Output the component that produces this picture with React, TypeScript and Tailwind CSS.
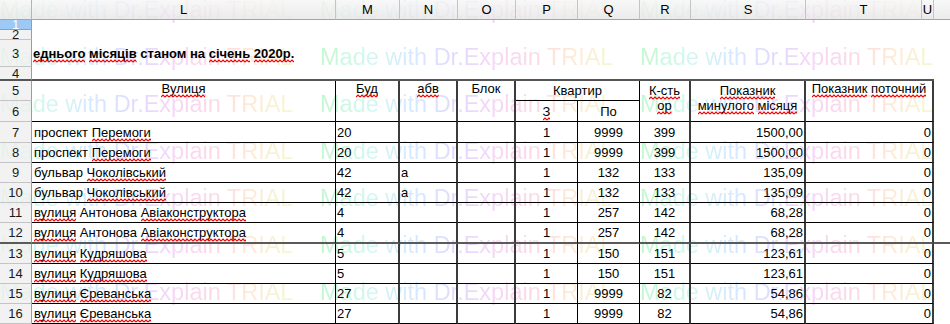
import React, { useId } from 'react';

// --- Types ---
type Part = [string, boolean];
type Row = {
  n: number;
  street: Part[];
  bud: string;
  abv: string;
  z: string;
  po: string;
  k: string;
  prev: string;
  cur: string;
};

const rows: Row[] = [
  { n: 7, street: [['проспект ', false], ['Перемоги', true]], bud: '20', abv: '', z: '1', po: '9999', k: '399', prev: '1500,00', cur: '0' },
  { n: 8, street: [['проспект ', false], ['Перемоги', true]], bud: '20', abv: '', z: '1', po: '9999', k: '399', prev: '1500,00', cur: '0' },
  { n: 9, street: [['бульвар ', false], ['Чоколівський', true]], bud: '42', abv: 'а', z: '1', po: '132', k: '133', prev: '135,09', cur: '0' },
  { n: 10, street: [['бульвар ', false], ['Чоколівський', true]], bud: '42', abv: 'а', z: '1', po: '132', k: '133', prev: '135,09', cur: '0' },
  { n: 11, street: [['вулиця', true], [' Антонова ', false], ['Авіаконструктора', true]], bud: '4', abv: '', z: '1', po: '257', k: '142', prev: '68,28', cur: '0' },
  { n: 12, street: [['вулиця', true], [' Антонова ', false], ['Авіаконструктора', true]], bud: '4', abv: '', z: '1', po: '257', k: '142', prev: '68,28', cur: '0' },
  { n: 13, street: [['вулиця', true], [' ', false], ['Кудряшова', true]], bud: '5', abv: '', z: '1', po: '150', k: '151', prev: '123,61', cur: '0' },
  { n: 14, street: [['вулиця', true], [' ', false], ['Кудряшова', true]], bud: '5', abv: '', z: '1', po: '150', k: '151', prev: '123,61', cur: '0' },
  { n: 15, street: [['вулиця', true], [' ', false], ['Єреванська', true]], bud: '27', abv: '', z: '1', po: '9999', k: '82', prev: '54,86', cur: '0' },
  { n: 16, street: [['вулиця', true], [' ', false], ['Єреванська', true]], bud: '27', abv: '', z: '1', po: '9999', k: '82', prev: '54,86', cur: '0' },
];

const colLetters = ['L', 'M', 'N', 'O', 'P', 'Q', 'R', 'S', 'T', 'U', ''];

// spell-check squiggle under one word
function Word({ t }: { t: string }) {
  const id = 'sq' + useId().replace(/[^a-zA-Z0-9]/g, '');
  return (
    <span className="relative inline-block">
      {t}
      <svg className="absolute left-0 top-[13px] w-full h-[4px]">
        <defs>
          <pattern id={id} width="4" height="4" patternUnits="userSpaceOnUse">
            <path d="M0 3 L2 1 L4 3" fill="none" stroke="#f00000" strokeWidth="1.15" />
          </pattern>
        </defs>
        <rect width="100%" height="4" fill={`url(#${id})`} />
      </svg>
    </span>
  );
}

function Sp({ children }: { children: string }) {
  const words = children.split(' ');
  return (
    <span className="whitespace-pre">
      {words.map((w, i) => (
        <React.Fragment key={i}>
          {i > 0 && ' '}
          <Word t={w} />
        </React.Fragment>
      ))}
    </span>
  );
}

function RowHead({ n, cls = 'border-b border-b-[#c4c4c4]', active = false }: { n: number; cls?: string; active?: boolean }) {
  return (
    <div
      className={`flex items-center justify-center leading-none border-r border-r-[#9c9c9c] ${cls} ${
        active ? 'bg-[#9ccaf4] text-white' : 'bg-[#efefefcc] text-[#1a1a1a]'
      }`}
    >
      {n}
    </div>
  );
}

function Watermark() {
  return (
    <span className="inline-block whitespace-nowrap text-[23.5px] leading-none bg-[linear-gradient(90deg,#c4f7cf_0%,#d2f8f0_16%,#d6e9ff_32%,#e0dbff_46%,#f7d6f6_60%,#fcdbe4_74%,#feead7_86%,#f3f8d3_100%)] bg-clip-text text-transparent">
      Made with Dr.Explain TRIAL
    </span>
  );
}

export default function App() {
  const gray2 = 'border-r-2 border-r-[#3c3c3c]';
  const black1 = 'border-r border-r-black';

  return (
    <div className="relative isolate w-[950px] h-[324px] overflow-hidden bg-white text-black text-[13px] leading-[15px] [font-family:'Liberation_Sans',Arial,sans-serif]">
      {/* trial watermark, painted under the sheet content */}
      <div className="pointer-events-none absolute inset-0 -z-10 flex flex-col -mt-[1px]">
        {[0, 1, 2, 3, 4, 5, 6].map((i) => (
          <div key={i} className="flex h-[47px] shrink-0">
            <div className="w-[320px] shrink-0"><Watermark /></div>
            <div className="w-[320px] shrink-0"><Watermark /></div>
            <div className="w-[320px] shrink-0"><Watermark /></div>
          </div>
        ))}
      </div>

      <div className="grid grid-cols-[32px_304px_64px_58px_58px_62px_62px_51px_115px_116px_12px_1fr] grid-rows-[20px_10px_10px_27px_14px_20px_21px_21px_20px_20px_20px_20px_21px_20px_20px_20px_20px]">
        {/* column header */}
        <div className="border-r border-r-[#b4b4b4] border-b border-b-[#a4a4a4] bg-[linear-gradient(#f6f6f6cc,#e6e6e6cc)]" />
        {colLetters.map((c, i) => (
          <div
            key={i}
            className={`flex items-center justify-center leading-none text-[13px] border-b border-b-[#a4a4a4] bg-[linear-gradient(#f6f6f6cc,#e6e6e6cc)] ${
              c ? 'border-r border-r-[#c4c4c4]' : ''
            }`}
          >
            {c}
          </div>
        ))}

        {/* rows 1-4 */}
        <RowHead n={1} active cls="border-b border-b-[#6ea8e4]" />
        <div className="col-span-11" />
        <RowHead n={2} />
        <div className="col-span-11" />
        <RowHead n={3} />
        <div className="col-span-11 flex items-center pl-px font-bold whitespace-pre">
          <Sp>еднього місяців</Sp> станом на <Sp>січень 2020р.</Sp>
        </div>
        <RowHead n={4} cls="border-b-2 border-b-[#555555]" />
        <div className="col-span-10 border-b-2 border-b-[#555555]" />
        <div />

        {/* rows 5-6 : table header */}
        <RowHead n={5} />
        <div className={`row-span-2 ${black1} border-b border-b-black flex justify-center`}>
          <Sp>Вулиця</Sp>
        </div>
        <div className={`row-span-2 ${gray2} border-b border-b-black flex justify-center`}>
          <Sp>Буд</Sp>
        </div>
        <div className={`row-span-2 ${gray2} border-b border-b-black flex justify-center`}>
          <Sp>абв</Sp>
        </div>
        <div className={`row-span-2 ${gray2} border-b border-b-black flex justify-center`}>Блок</div>
        <div className={`col-span-2 ${black1} border-b border-b-black flex items-center justify-center`}>Квартир</div>
        <div className={`row-span-2 ${gray2} border-b border-b-black flex flex-col items-center pt-[2px]`}>
          <Sp>К-сть</Sp>
          <Sp>ор</Sp>
        </div>
        <div className={`row-span-2 ${gray2} border-b border-b-black flex flex-col items-center pt-[2px]`}>
          <Sp>Показник</Sp>
          <Sp>минулого місяця</Sp>
        </div>
        <div className={`row-span-2 col-span-2 ${gray2} border-b border-b-black flex justify-center`}>
          <Sp>Показник поточний</Sp>
        </div>
        <div />
        <RowHead n={6} />
        <div className={`${black1} border-b border-b-black flex items-center justify-center`}>
          <Sp>З</Sp>
        </div>
        <div className={`${black1} border-b border-b-black flex items-center justify-center`}>По</div>
        <div />

        {/* data rows */}
        {rows.map((r) => {
          const bb = r.n === 12 ? 'border-b-2 border-b-[#5a5a5a]' : 'border-b border-b-black';
          const cell = `${bb} flex items-center whitespace-nowrap`;
          return (
            <React.Fragment key={r.n}>
              <RowHead n={r.n} cls={r.n === 12 ? 'border-b-2 border-b-[#5a5a5a]' : 'border-b border-b-[#c4c4c4]'} />
              <div className={`${cell} ${black1} pl-[2px]`}>
                {r.street.map(([t, wavy], i) => (wavy ? <Sp key={i}>{t}</Sp> : <span key={i} className="whitespace-pre">{t}</span>))}
              </div>
              <div className={`${cell} ${gray2} pl-[1px]`}>{r.bud}</div>
              <div className={`${cell} ${gray2} pl-[1px]`}>{r.abv}</div>
              <div className={`${cell} ${gray2}`} />
              <div className={`${cell} ${black1} justify-center`}>{r.z}</div>
              <div className={`${cell} ${black1} justify-center`}>{r.po}</div>
              <div className={`${cell} ${gray2} justify-center`}>{r.k}</div>
              <div className={`${cell} ${gray2} justify-end pr-[1px]`}>{r.prev}</div>
              <div className={`${cell} ${gray2} col-span-2 justify-end pr-[1px]`}>{r.cur}</div>
              <div className={r.n === 12 ? 'border-b-2 border-b-[#5a5a5a]' : ''} />
            </React.Fragment>
          );
        })}
      </div>
    </div>
  );
}
